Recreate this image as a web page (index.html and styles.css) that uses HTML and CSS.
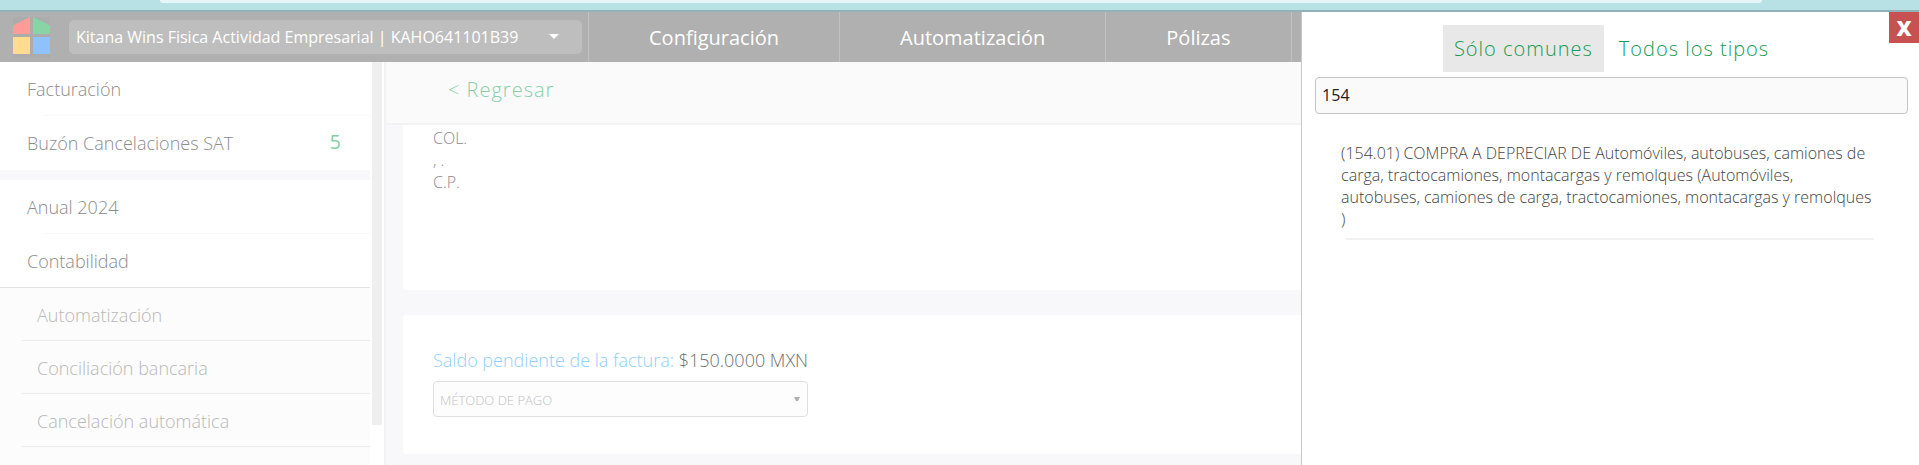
FILE: index.html
```
<!DOCTYPE html>
<html lang="es">
  <head>
    <meta charset="UTF-8" />
    <meta name="viewport" content="width=device-width, initial-scale=1.0" />
    <title>Contabilidad - Factura</title>
    <link rel="stylesheet" href="styles.css">
  </head>
  <body>
    <div class="barra-superior"><div class="barra-clara"></div></div>

    <header class="encabezado">
      <a href="#" class="logo" aria-label="Inicio">
        <svg width="37" height="41" viewBox="0 0 37 41">
          <rect width="37" height="41" fill="#acacac" />
          <path d="M0 8.500L17 0V17H0z" fill="#ff9c98" />
          <path d="M20 0L37 8.500V17H20z" fill="#89d4a5" />
          <rect y="20" width="17" height="17" fill="#ffdc8f" />
          <rect x="20" y="20" width="17" height="17" fill="#8fc2fb" />
        </svg>
      </a>
      <div class="empresa">
        <select aria-label="Empresa">
          <option>Kitana Wins Fisica Actividad Empresarial | KAHO641101B39</option>
        </select>
        <svg class="flecha" width="10" height="5" viewBox="0 0 10 5"><path d="M0 0H10L5 5z" fill="#fff" /></svg>
      </div>
      <nav class="menu">
        <a href="#">Configuración</a>
        <a href="#">Automatización</a>
        <a href="#">Pólizas</a>
      </nav>
    </header>

    <div class="contenido">
      <aside class="sidebar">
        <nav class="lista">
          <a href="#">Facturación</a>
          <a href="#" class="ultimo">Buzón Cancelaciones SAT <span class="contador">5</span></a>
          <div class="separador"></div>
          <a href="#">Anual 2024</a>
          <a href="#" class="abierto">Contabilidad</a>
          <div class="submenu">
            <a href="#">Automatización</a>
            <a href="#">Conciliación bancaria</a>
            <a href="#">Cancelación automática</a>
          </div>
        </nav>
        <div class="scroll"></div>
      </aside>

      <main class="principal">
        <div class="regresar"><a href="#">&lt; Regresar</a></div>
        <section class="tarjeta direccion">
          <p>COL.</p>
          <p>, .</p>
          <p>C.P.</p>
        </section>
        <section class="tarjeta pago">
          <p class="saldo"><span>Saldo pendiente de la factura:</span> $150.0000 MXN</p>
          <div class="metodo">
            <select aria-label="Método de pago">
              <option>MÉTODO DE PAGO</option>
            </select>
            <svg class="flecha" width="6" height="4" viewBox="0 0 6 4"><path d="M0 0H6L4 4H2z" fill="#b0b0b0" /></svg>
          </div>
        </section>
      </main>
    </div>

    <div class="panel">
      <button class="cerrar" aria-label="Cerrar">X</button>
      <div class="pestanas">
        <button class="activa">Sólo comunes</button>
        <button>Todos los tipos</button>
      </div>
      <input type="text" class="buscar" value="154" aria-label="Buscar cuenta" />
      <ul class="resultados">
        <li>(154.01) COMPRA A DEPRECIAR DE Automóviles, autobuses, camiones de carga, tractocamiones, montacargas y remolques (Automóviles, autobuses, camiones de carga, tractocamiones, montacargas y remolques )</li>
      </ul>
    </div>
  </body>
</html>
```

FILE: styles.css
```
* {
  box-sizing: border-box;
}
body {
  font-family: "Open Sans", sans-serif;
  font-size: 16px;
  font-weight: 300;
  margin: 0;
  height: 100vh;
  display: flex;
  flex-direction: column;
  overflow: hidden;
  position: relative;
}
a {
  text-decoration: none;
}
p {
  margin: 0;
}
button,
input,
select {
  font-family: inherit;
  margin: 0;
}
select {
  appearance: none;
  width: 100%;
}
.barra-superior {
  flex: none;
  height: 12px;
  padding: 0 157px 0 160px;
  background-color: #b7e1e4;
  border-bottom: 2px solid #8fb3b7;
}
.barra-clara {
  height: 3px;
  background-color: #e6f6f7;
  border-radius: 0 0 8px 8px;
}

/* encabezado */
.encabezado {
  flex: none;
  display: flex;
  align-items: center;
  height: 50px;
  background-color: #b0b0b0;
}
.logo {
  display: flex;
  margin: 0 19px 0 13px;
}
.empresa {
  position: relative;
  width: 513px;
  margin-right: 6px;
}
.empresa select {
  display: block;
  height: 34px;
  padding: 0 7px;
  border: 0;
  border-radius: 5px;
  background-color: #bebebe;
  color: #fff;
  font-size: 16px;
}
.flecha {
  position: absolute;
  top: 14px;
  right: 23px;
}
.menu {
  display: flex;
  height: 100%;
  border-right: 1px solid #c2c2c2;
}
.menu a {
  padding: 0 60px;
  border-left: 1px solid #c2c2c2;
  color: #fff;
  font-size: 20px;
  font-weight: 400;
  line-height: 52px;
}

/* menu lateral */
.contenido {
  flex: 1;
  min-height: 0;
  display: flex;
}
.sidebar {
  flex: none;
  display: flex;
  gap: 2px;
  width: 386px;
  border-right: 2px solid #f2f2f3;
  overflow: hidden;
}
.lista {
  width: 370px;
}
.lista a {
  display: flex;
  justify-content: space-between;
  height: 54px;
  padding-left: 27px;
  color: #8c8c8c;
  font-size: 18px;
  line-height: 54px;
  background: linear-gradient(#f8f8f8, #f8f8f8) 44px 100% / 100% 1px no-repeat;
}
.lista .ultimo {
  background: none;
}
.lista .abierto {
  background: none;
  border-bottom: 1px solid #e2e2e2;
}
.contador {
  padding-right: 29px;
  color: #86d0a9;
  font-size: 20px;
  font-weight: 400;
  line-height: 52px;
}
.separador {
  height: 10px;
  background-color: #f8f8fa;
}
.submenu {
  height: 100%;
  padding-left: 22px;
  background-color: #fcfcfc;
}
.submenu a {
  height: 53px;
  padding-left: 15px;
  border-bottom: 1px solid #ebebeb;
  background: none;
  color: #b8b8b8;
}
.scroll {
  width: 10px;
  height: 90%;
  background-color: #efefef;
}

/* contenido principal */
.principal {
  flex: 1;
  background-color: #f8f8fa;
}
.regresar {
  height: 63px;
  padding-left: 62px;
  background-color: #fafafa;
  border-bottom: 2px solid #f2f2f2;
  font-size: 20px;
  letter-spacing: 1px;
  line-height: 56px;
}
.regresar a {
  color: #86d0a9;
}
.tarjeta {
  margin: 0 17px 25px;
  padding: 0 30px;
  background-color: #fff;
  border-radius: 4px;
}
.direccion {
  height: 165px;
  padding-top: 2px;
  border-radius: 0 0 4px 4px;
  color: #8c8c8c;
  line-height: 22px;
}
.pago {
  padding-top: 32px;
  padding-bottom: 37px;
}
.saldo {
  margin-bottom: 8px;
  color: #707070;
  font-size: 18px;
  line-height: 26px;
}
.saldo span {
  color: #8fcffd;
}
.metodo {
  position: relative;
  width: 375px;
}
.metodo select {
  display: block;
  height: 36px;
  padding: 2px 6px 0;
  border: 1px solid #e0e0e0;
  border-radius: 4px;
  background-color: #fdfdfd;
  color: #c0c0c0;
  font-size: 13px;
  font-weight: 300;
}
.metodo .flecha {
  top: 16px;
  right: 8px;
}

/* panel de cuentas */
.panel {
  position: absolute;
  top: 12px;
  right: 0;
  bottom: 0;
  width: 32.2%;
  padding: 13px 11px 0 13px;
  border-left: 1px solid #c8c8c8;
  background-color: #fff;
}
.cerrar {
  position: absolute;
  top: 0;
  right: 0;
  width: 30px;
  height: 31px;
  padding: 0;
  border: 0;
  background-color: #c75050;
  color: #fff;
  font-size: 21px;
  font-weight: 800;
  line-height: 28px;
}
.pestanas {
  display: flex;
  justify-content: center;
  gap: 4px;
}
.pestanas button {
  height: 47px;
  padding: 0 11px;
  border: 0;
  background: none;
  color: #169b50;
  font-size: 20px;
  font-weight: 300;
  letter-spacing: 1px;
}
.pestanas .activa {
  background-color: #e8e8e8;
}
.buscar {
  display: block;
  width: 100%;
  height: 37px;
  margin-top: 5px;
  padding: 0 6px 2px;
  border: 1px solid #c4c4c4;
  border-radius: 4px;
  background-color: #fafafa;
  color: #222;
  font-size: 16px;
}
.resultados {
  margin: 28px 34px 0 26px;
  padding: 0;
  list-style: none;
}
.resultados li {
  padding-bottom: 10px;
  background: linear-gradient(#f2f2f2, #f2f2f2) 5px 100% / 100% 2px no-repeat;
  color: #444;
  line-height: 22px;
}
```
